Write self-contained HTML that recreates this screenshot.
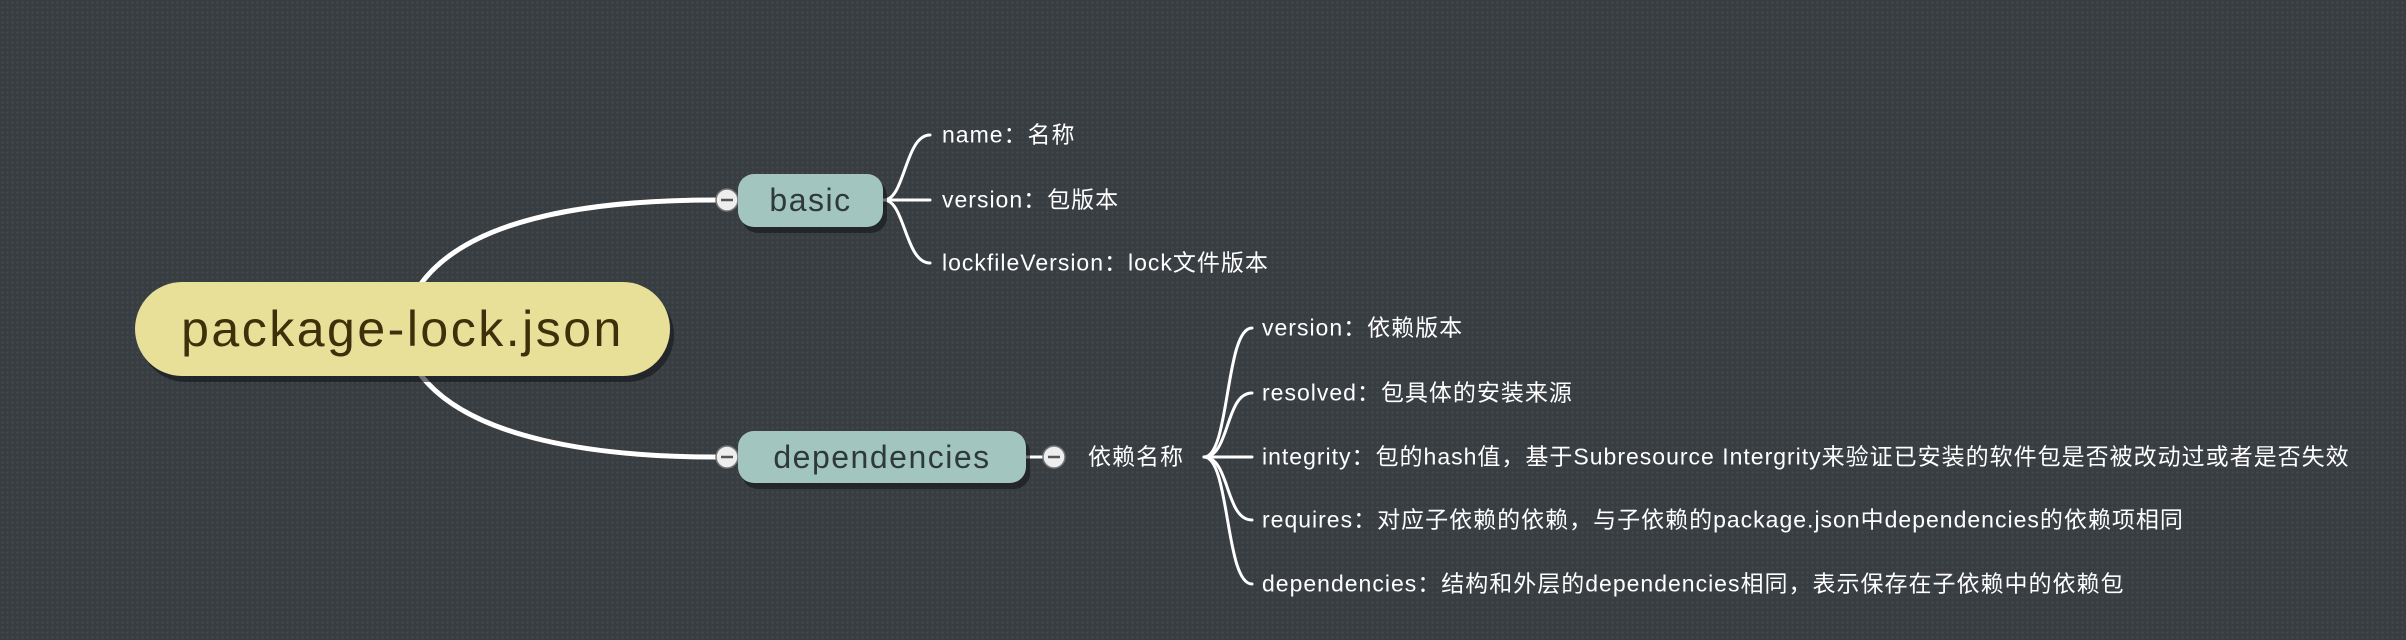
<!DOCTYPE html>
<html><head><meta charset="utf-8"><style>
body{margin:0;width:2406px;height:640px;overflow:hidden;background:#383d42;
background-image:radial-gradient(circle,#454a4f 1px,transparent 1.3px);background-size:5px 5px;
font-family:"Liberation Sans","Noto Sans CJK SC",sans-serif;}
.t{position:absolute;color:#fff;font-size:23px;letter-spacing:1px;white-space:nowrap;line-height:1;transform:translateY(-50%);}
.n{position:absolute;background:#a3c5bf;border-radius:16px;color:#2e3a38;font-size:32px;letter-spacing:1.5px;display:flex;align-items:center;justify-content:center;box-shadow:4px 6px 0 rgba(20,22,25,.6);}
</style></head><body>
<svg width="2406" height="640" style="position:absolute;left:0;top:0">
<g fill="none" stroke="#fff" stroke-linecap="round">
<path d="M420 285 C470 215,600 200,716 200" stroke-width="5"/>
<path d="M420 374 C470 440,600 457,716 457" stroke-width="5"/>
<line x1="1026" y1="457" x2="1044" y2="457" stroke-width="3"/>
<g stroke-width="3">
<path d="M884 200 C905 200,905 135,930 135"/>
<path d="M884 200 L930 200"/>
<path d="M884 200 C905 200,905 263,930 263"/>
<path d="M1204 457 C1230 457,1225 328,1252 328"/>
<path d="M1204 457 C1230 457,1225 393,1252 393"/>
<path d="M1204 457 L1252 457"/>
<path d="M1204 457 C1230 457,1225 520,1252 520"/>
<path d="M1204 457 C1230 457,1225 584,1252 584"/>
</g></g>
<g fill="#eee" stroke="#777" stroke-width="1.5">
<circle cx="727" cy="200" r="11"/><circle cx="727" cy="457" r="11"/><circle cx="1054" cy="457" r="11"/>
</g>
<g stroke="#555" stroke-width="2.5"><line x1="721" y1="200" x2="733" y2="200"/><line x1="721" y1="457" x2="733" y2="457"/><line x1="1048" y1="457" x2="1060" y2="457"/></g>
</svg>
<div class="n" style="left:135px;top:282px;width:535px;height:94px;border-radius:47px;background:#e8df98;color:#3d300a;font-size:50px;letter-spacing:2.5px;">package-lock.json</div>
<div class="n" style="left:738px;top:174px;width:145px;height:53px;">basic</div>
<div class="n" style="left:738px;top:431px;width:288px;height:52px;">dependencies</div>
<div class="t" style="left:1088px;top:457px">依赖名称</div>
<div class="t" style="left:942px;top:135px">name：名称</div>
<div class="t" style="left:942px;top:200px">version：包版本</div>
<div class="t" style="left:942px;top:263px">lockfileVersion：lock文件版本</div>
<div class="t" style="left:1262px;top:328px">version：依赖版本</div>
<div class="t" style="left:1262px;top:393px">resolved：包具体的安装来源</div>
<div class="t" style="left:1262px;top:457px">integrity：包的hash值，基于Subresource Intergrity来验证已安装的软件包是否被改动过或者是否失效</div>
<div class="t" style="left:1262px;top:520px">requires：对应子依赖的依赖，与子依赖的package.json中dependencies的依赖项相同</div>
<div class="t" style="left:1262px;top:584px">dependencies：结构和外层的dependencies相同，表示保存在子依赖中的依赖包</div>
</body></html>
